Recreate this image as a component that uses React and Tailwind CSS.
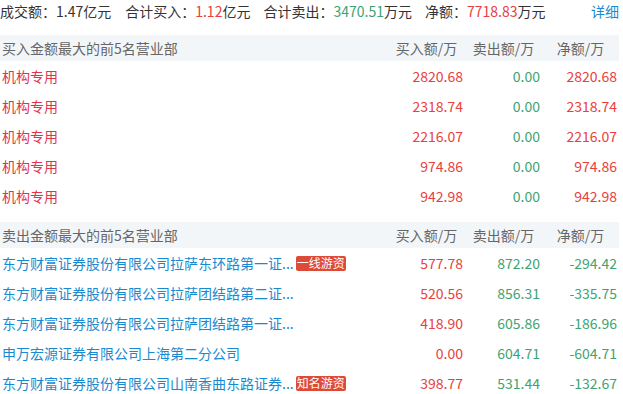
const BUY_ROWS = [
  { name: '机构专用', buy: '2820.68', sell: '0.00', net: '2820.68' },
  { name: '机构专用', buy: '2318.74', sell: '0.00', net: '2318.74' },
  { name: '机构专用', buy: '2216.07', sell: '0.00', net: '2216.07' },
  { name: '机构专用', buy: '974.86', sell: '0.00', net: '974.86' },
  { name: '机构专用', buy: '942.98', sell: '0.00', net: '942.98' },
]

const SELL_ROWS = [
  { name: '东方财富证券股份有限公司拉萨东环路第一证...', tag: '一线游资', buy: '577.78', sell: '872.20', net: '-294.42' },
  { name: '东方财富证券股份有限公司拉萨团结路第二证...', buy: '520.56', sell: '856.31', net: '-335.75' },
  { name: '东方财富证券股份有限公司拉萨团结路第一证...', buy: '418.90', sell: '605.86', net: '-186.96' },
  { name: '申万宏源证券有限公司上海第二分公司', buy: '0.00', sell: '604.71', net: '-604.71' },
  { name: '东方财富证券股份有限公司山南香曲东路证券...', tag: '知名游资', buy: '398.77', sell: '531.44', net: '-132.67' },
]

const RED = 'text-[#e8413e]'
const GREEN = 'text-[#3ea372]'

function Section({ title, rows, nameClass }) {
  return (
    <div>
      <div className="flex h-[26px] items-center bg-[#f3f6f9] text-[#666]">
        <div className="flex-1 pl-[2px]">{title}</div>
        <div className="w-[77px] text-center">买入额/万</div>
        <div className="w-[77px] text-center">卖出额/万</div>
        <div className="w-[77px] text-center">净额/万</div>
      </div>
      {rows.map((r, i) => (
        <div key={i} className="flex h-[30px] items-center">
          <div className="flex flex-1 items-center pl-[2px]">
            <span className={nameClass}>{r.name}</span>
            {r.tag && (
              <span className="ml-[2px] flex h-[15px] w-[50px] items-center justify-center rounded-[2px] bg-[#dd4a38] text-[12px] leading-none text-white">
                {r.tag}
              </span>
            )}
          </div>
          <div className={`w-[77px] pr-[2px] text-right ${RED}`}>{r.buy}</div>
          <div className={`w-[77px] pr-[2px] text-right ${GREEN}`}>{r.sell}</div>
          <div className={`w-[77px] pr-[2px] text-right ${r.net.startsWith('-') ? GREEN : RED}`}>{r.net}</div>
        </div>
      ))}
    </div>
  )
}

export default function App() {
  return (
    <div className="w-[619px] bg-white font-['Noto_Sans_CJK_SC',sans-serif] text-[14px] text-[#333]">
      {/* Summary line */}
      <div className="mb-[13px] flex h-[22px] items-center">
        <span>成交额：1.47亿元</span>
        <span className="ml-[14px]">
          合计买入：<span className={RED}>1.12</span>亿元
        </span>
        <span className="ml-[13px]">
          合计卖出：<span className={GREEN}>3470.51</span>万元
        </span>
        <span className="ml-[13px]">
          净额：<span className={RED}>7718.83</span>万元
        </span>
        <span className="ml-auto text-[#1a8ad0]">详细</span>
      </div>

      <Section title="买入金额最大的前5名营业部" rows={BUY_ROWS} nameClass="text-[#e0344c]" />
      <div className="h-[11px]" />
      <Section title="卖出金额最大的前5名营业部" rows={SELL_ROWS} nameClass="text-[#1a8ad0]" />
    </div>
  )
}
